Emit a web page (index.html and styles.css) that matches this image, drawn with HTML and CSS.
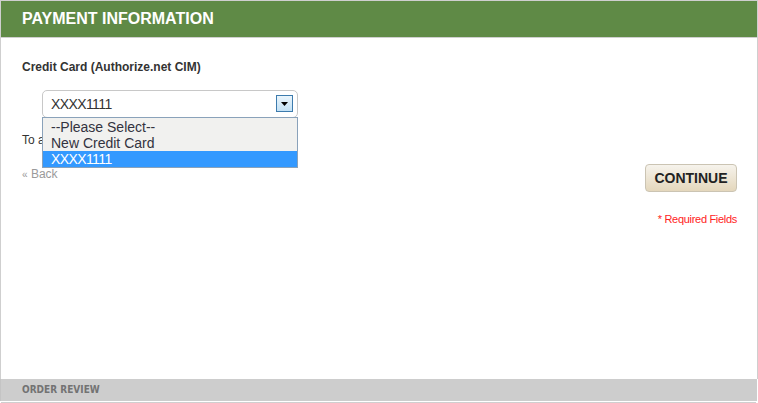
FILE: index.html
```html
<!DOCTYPE html>
<html>
<head>
<meta charset="utf-8">
<title>Payment Information</title>
<link rel="stylesheet" href="styles.css">
</head>
<body>
<div class="page">
  <section class="panel">
    <h2 class="panel-title">PAYMENT INFORMATION</h2>
    <div class="content">
      <div class="field-label">Credit Card (Authorize.net CIM)</div>
      <div class="select">
        <span class="select-value">XXXX1111</span>
        <span class="select-btn">
          <svg width="7" height="4" viewBox="0 0 7 4"><path d="M0 0H7L3.5 4Z" fill="#000"/></svg>
        </span>
        <ul class="select-list">
          <li class="opt">--Please Select--</li>
          <li class="opt">New Credit Card</li>
          <li class="opt opt-active"><span class="xxxx">XXXX1111</span></li>
        </ul>
      </div>
      <p class="note">To add a new card, choose New Credit Card.</p>
      <div class="actions">
        <a class="back"><span class="raquo">&laquo;</span> Back</a>
        <button class="btn-continue">CONTINUE</button>
      </div>
      <p class="required">* Required Fields</p>
    </div>
  </section>
  <div class="review">ORDER REVIEW</div>
</div>
</body>
</html>
```

FILE: styles.css
```css
* { box-sizing: border-box; }
html, body { margin: 0; padding: 0; background: #fff; }
body { font-family: "Liberation Sans", Arial, sans-serif; color: #333; }

.page { width: 758px; height: 403px; }

.panel {
  border-top: 1px solid #cfcfcf;
  border-left: 1px solid #cfcfcf;
  border-right: 1px solid #cfcfcf;
}

.panel-title {
  margin: 0;
  height: 37px;
  line-height: 36px;
  padding-left: 21px;
  background: #5f8a46;
  border-bottom: 1px solid #cfcfcf;
  color: #fff;
  font-size: 16px;
  font-weight: bold;
}

.content {
  height: 341px;
  padding: 22px 20px 0 21px;
}

.field-label {
  font-size: 12px;
  line-height: 14px;
  font-weight: bold;
  color: #333;
}

.select {
  position: relative;
  margin: 16px 0 0 20px;
  width: 256px;
  height: 28px;
  border: 1px solid #c8c8c8;
  border-radius: 5px;
  background: #fff;
  display: flex;
  align-items: center;
  padding-left: 8px;
}
.select-value {
  flex: 1;
  font-size: 14px;
  color: #333;
  letter-spacing: -0.6px;
}
.select-btn {
  width: 17px;
  height: 17px;
  margin-right: 4px;
  margin-top: -1px;
  border: 1px solid #3d7bad;
  background: linear-gradient(#eaf5fc, #c3e1f5);
  display: flex;
  align-items: center;
  justify-content: center;
}

.select-list {
  position: absolute;
  top: 26px;
  left: -1px;
  width: 256px;
  margin: 0;
  padding: 1px 0 0;
  list-style: none;
  background: #f1f1ef;
  border: 1px solid #8aa2ba;
}
.opt {
  height: 16px;
  line-height: 16px;
  padding-left: 8px;
  font-size: 14px;
  color: #333340;
}
.opt-active { background: #3399ff; color: #fff; }
.xxxx { letter-spacing: -0.6px; }

.note {
  margin: 15px 0 0;
  font-size: 12px;
  line-height: 14px;
  color: #333;
  white-space: nowrap;
}

.actions {
  margin-top: 17px;
  display: flex;
  justify-content: space-between;
  align-items: flex-start;
}
.back {
  padding-top: 3px;
  font-size: 12px;
  line-height: 14px;
  color: #9a9a9a;
}
.raquo { font-size: 10px; }

.btn-continue {
  width: 92px;
  height: 28px;
  padding: 0;
  border: 1px solid #cbc4b3;
  border-radius: 4px;
  background: linear-gradient(#f6f3ec, #e4d7bc);
  font-family: "Liberation Sans", Arial, sans-serif;
  font-size: 14px;
  font-weight: bold;
  color: #222;
}

.required {
  margin: 21px 0 0;
  text-align: right;
  font-size: 11px;
  line-height: 13px;
  color: #f22;
  letter-spacing: -0.3px;
}

.review {
  width: 757px;
  height: 22px;
  line-height: 22px;
  padding-left: 21px;
  background: #cdcdcd;
  border-left: 1px solid #c4c4c4;
  box-shadow: 0 2px 0 -1px #fff, 0 3px 0 -1px #cfcfcf;
  font-family: "DejaVu Sans Condensed", "DejaVu Sans", sans-serif;
  font-stretch: condensed;
  font-weight: bold;
  font-size: 10px;
  color: #737373;
}
```
